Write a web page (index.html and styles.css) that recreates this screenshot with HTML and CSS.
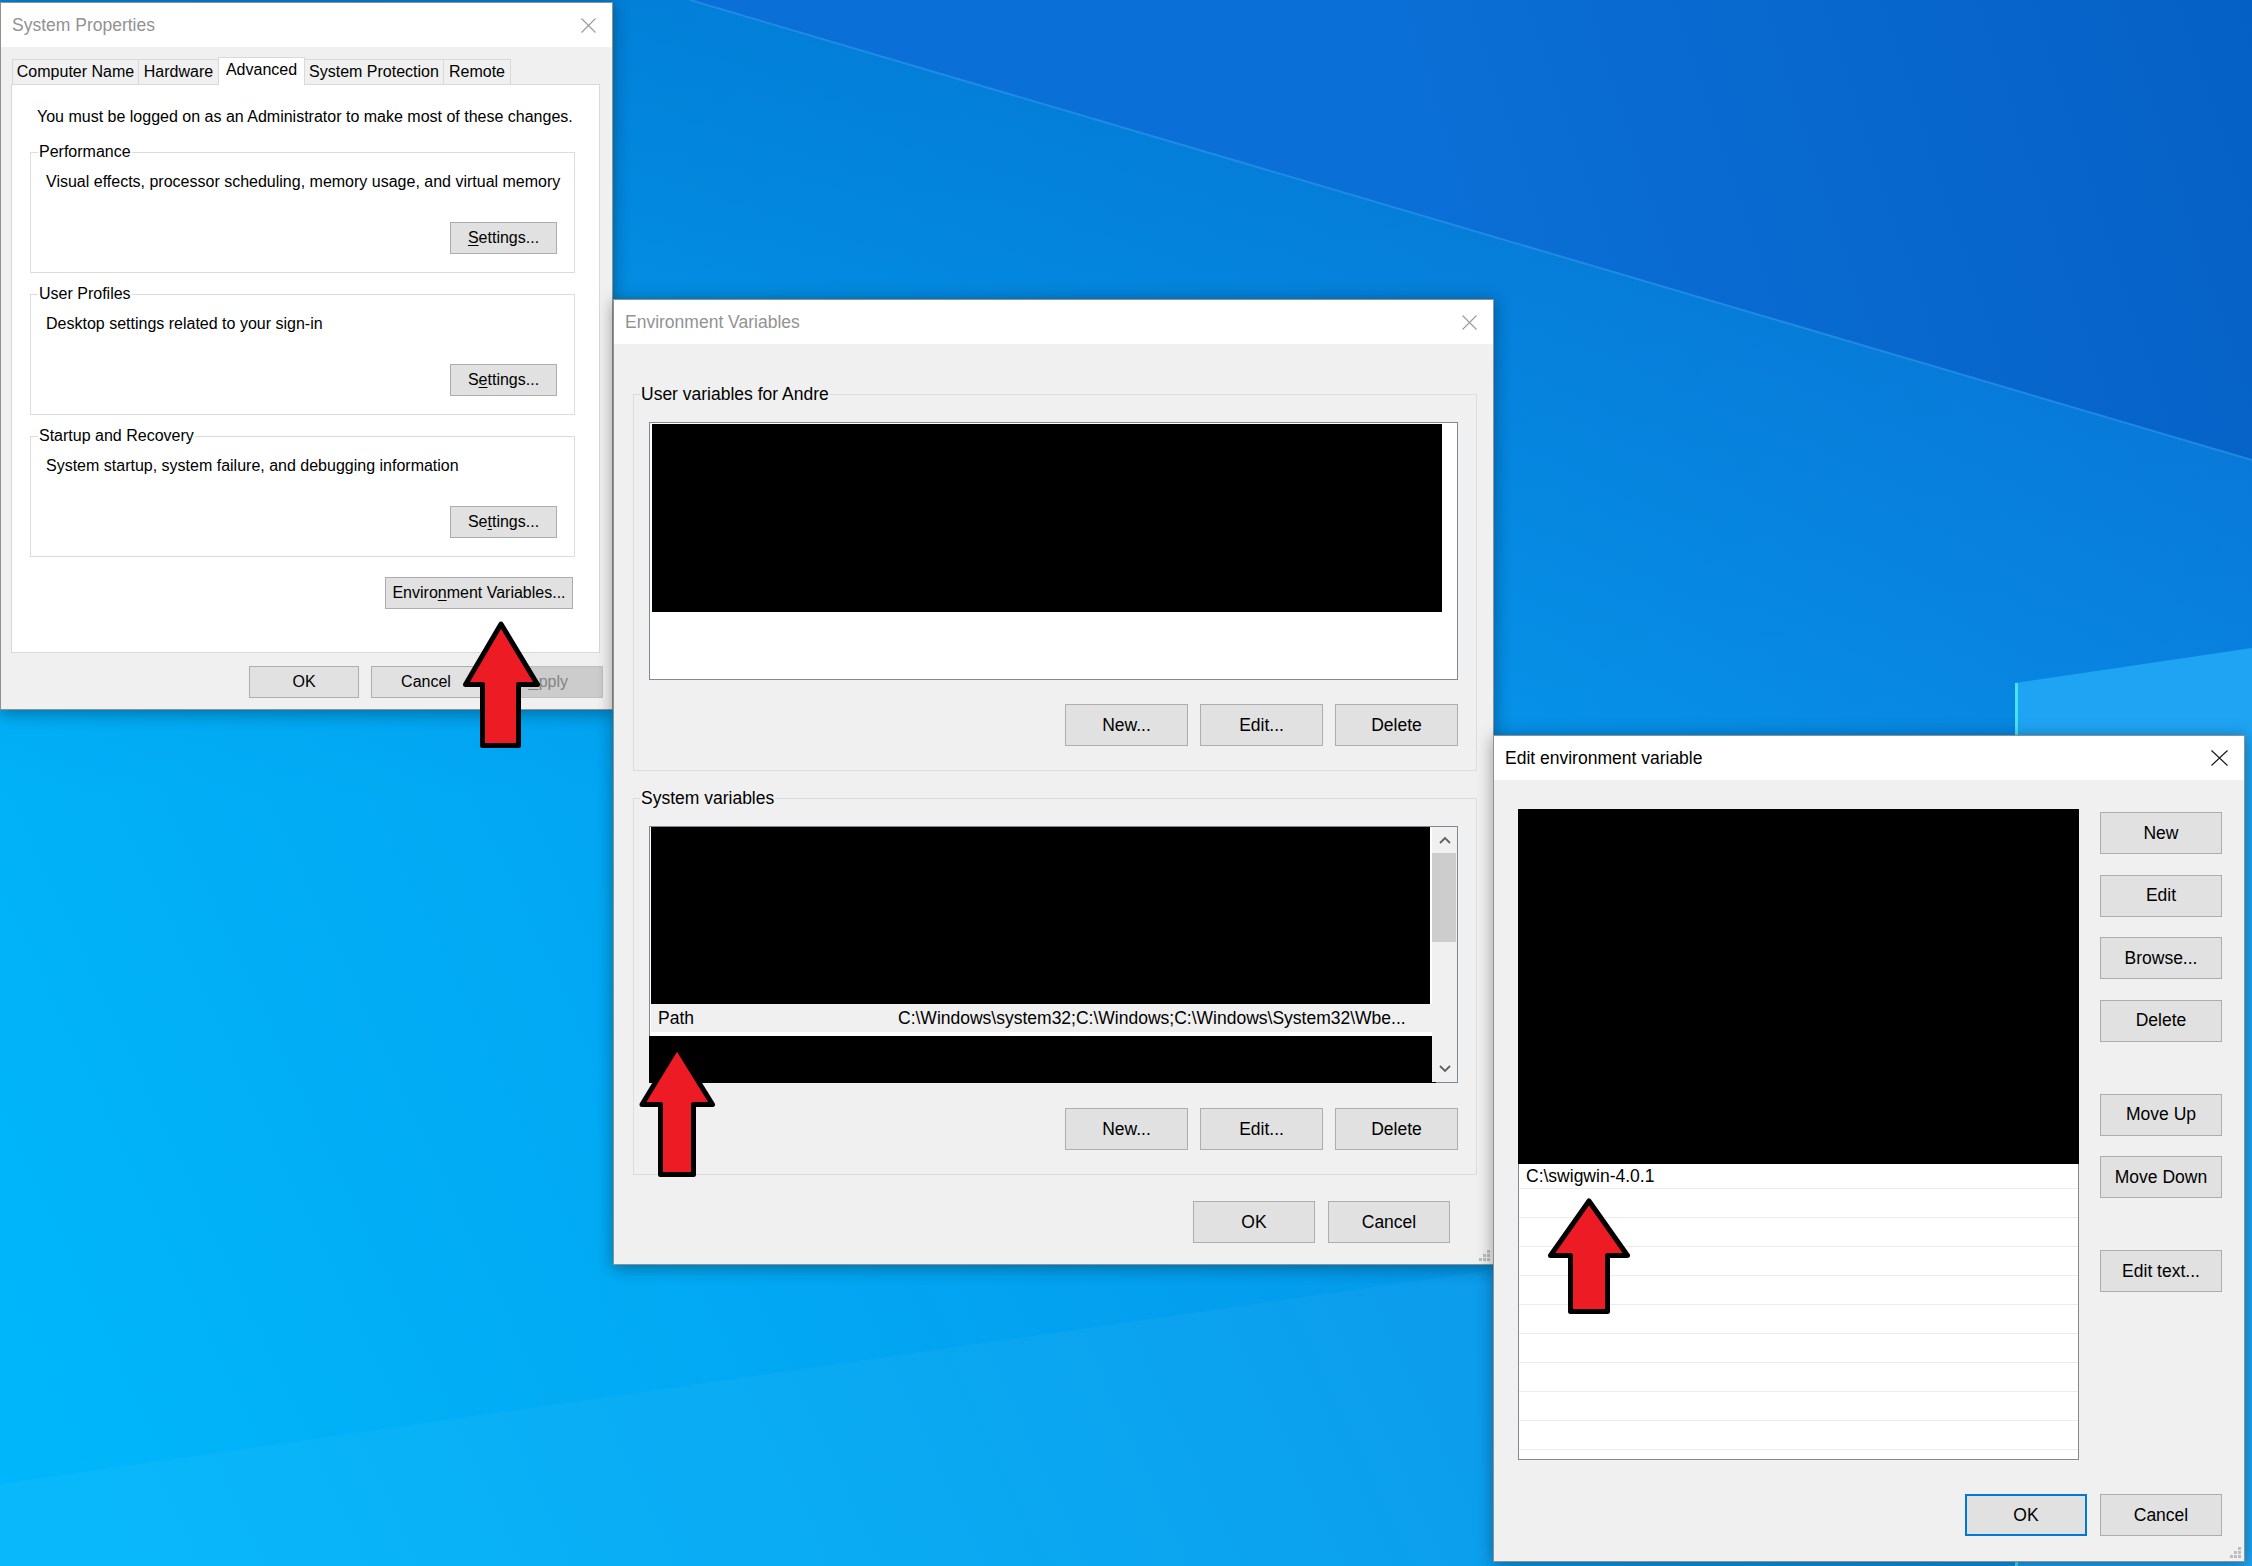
FILE: index.html
```html
<!DOCTYPE html>
<html lang="en">
<head>
<meta charset="utf-8">
<title>Environment Variables</title>
<link rel="stylesheet" href="styles.css">
</head>
<body>
<div class="desktop">
  <svg class="wallpaper" width="2252" height="1566" viewBox="0 0 2252 1566">
    <defs>
      <linearGradient id="gBase" gradientUnits="userSpaceOnUse" x1="0" y1="1300" x2="2252" y2="250">
        <stop offset="0" stop-color="#00b6fa"/>
        <stop offset="0.45" stop-color="#039eee"/>
        <stop offset="1" stop-color="#0a80df"/>
      </linearGradient>
      <linearGradient id="gTop" gradientUnits="userSpaceOnUse" x1="0" y1="0" x2="0" y2="800">
        <stop offset="0" stop-color="#0048b0" stop-opacity="0.35"/>
        <stop offset="1" stop-color="#0048b0" stop-opacity="0"/>
      </linearGradient>
      <linearGradient id="gBeam" gradientUnits="userSpaceOnUse" x1="1450" y1="260" x2="2252" y2="0">
        <stop offset="0" stop-color="#0a6fd6"/>
        <stop offset="1" stop-color="#0560c5"/>
      </linearGradient>
    </defs>
    <rect x="0" y="0" width="2252" height="1566" fill="url(#gBase)"/>
    <rect x="0" y="0" width="2252" height="1566" fill="url(#gTop)"/>
    <polygon points="690,0 2252,0 2252,460" fill="url(#gBeam)"/>
    <line x1="690" y1="0" x2="2252" y2="460" stroke="#2a95ea" stroke-width="2" opacity="0.7"/>
    <polygon points="0,1484 2252,1161 2252,1566 0,1566" fill="#ffffff" opacity="0.035"/>
    <polygon points="2015,683 2252,648 2252,1566 2015,1566" fill="#1fa4f4"/>
    <line x1="2016.5" y1="683" x2="2016.5" y2="1566" stroke="#48e3f2" stroke-width="3"/>
  </svg>

  <!-- System Properties -->
  <section class="win win-sysprops">
    <header class="titlebar">
      <span class="title">System Properties</span>
      <svg class="close-x" width="15" height="15" viewBox="0 0 15 15"><path d="M0.5 0.5 L14.5 14.5 M14.5 0.5 L0.5 14.5" stroke="#9a9a9a" stroke-width="1.1" fill="none"/></svg>
    </header>
    <div class="sp-body">
      <div class="tabs">
        <div class="tab tab-first tab-cn">Computer Name</div>
        <div class="tab tab-hw">Hardware</div>
        <div class="tab tab-selected tab-adv">Advanced</div>
        <div class="tab tab-sp">System Protection</div>
        <div class="tab tab-rm">Remote</div>
      </div>
      <div class="tabpanel">
        <p class="note">You must be logged on as an Administrator to make most of these changes.</p>
        <fieldset class="group">
          <legend>Performance</legend>
          <p class="desc">Visual effects, processor scheduling, memory usage, and virtual memory</p>
          <div class="group-actions"><button class="btn btn-sp"><span><u>S</u>ettings...</span></button></div>
        </fieldset>
        <fieldset class="group">
          <legend>User Profiles</legend>
          <p class="desc">Desktop settings related to your sign-in</p>
          <div class="group-actions"><button class="btn btn-sp"><span>S<u>e</u>ttings...</span></button></div>
        </fieldset>
        <fieldset class="group">
          <legend>Startup and Recovery</legend>
          <p class="desc">System startup, system failure, and debugging information</p>
          <div class="group-actions"><button class="btn btn-sp"><span>Se<u>t</u>tings...</span></button></div>
        </fieldset>
        <div class="env-row"><button class="btn btn-envvars"><span>Enviro<u>n</u>ment Variables...</span></button></div>
      </div>
      <div class="sp-foot">
        <button class="btn btn-foot">OK</button>
        <button class="btn btn-foot">Cancel</button>
        <button class="btn btn-foot btn-disabled"><span><u>A</u>pply</span></button>
      </div>
    </div>
  </section>

  <!-- Environment Variables -->
  <section class="win win-envvars">
    <header class="titlebar">
      <span class="title">Environment Variables</span>
      <svg class="close-x" width="15" height="15" viewBox="0 0 15 15"><path d="M0.5 0.5 L14.5 14.5 M14.5 0.5 L0.5 14.5" stroke="#9a9a9a" stroke-width="1.1" fill="none"/></svg>
    </header>
    <div class="ev-body">
      <fieldset class="ev-group">
        <legend>User variables for Andre</legend>
        <div class="lb lb-user"><div class="redact redact-user"></div></div>
        <div class="ev-actions">
          <button class="btn btn-ev">New...</button>
          <button class="btn btn-ev">Edit...</button>
          <button class="btn btn-ev">Delete</button>
        </div>
      </fieldset>
      <fieldset class="ev-group ev-group-sys">
        <legend>System variables</legend>
        <div class="lb lb-sys">
          <div class="lb-sys-main">
            <div class="redact redact-sys-top"></div>
            <div class="path-row"><span class="path-name">Path</span><span class="path-value">C:\Windows\system32;C:\Windows;C:\Windows\System32\Wbe...</span></div>
            <div class="path-gap"></div>
            <div class="redact redact-sys-bottom"></div>
          </div>
          <div class="vscroll">
            <div class="vs-arrow"><svg width="12" height="8" viewBox="0 0 12 8"><polyline points="1,7 6,2 11,7" fill="none" stroke="#606060" stroke-width="1.8"/></svg></div>
            <div class="vs-thumb"></div>
            <div class="vs-track"></div>
            <div class="vs-arrow"><svg width="12" height="8" viewBox="0 0 12 8"><polyline points="1,1 6,6 11,1" fill="none" stroke="#606060" stroke-width="1.8"/></svg></div>
          </div>
        </div>
        <div class="ev-actions ev-actions-sys">
          <button class="btn btn-ev">New...</button>
          <button class="btn btn-ev">Edit...</button>
          <button class="btn btn-ev">Delete</button>
        </div>
      </fieldset>
      <div class="ev-foot">
        <button class="btn btn-ev-foot">OK</button>
        <button class="btn btn-ev-foot">Cancel</button>
      </div>
    </div>
    <svg class="grip" width="12" height="12" viewBox="0 0 12 12"><g fill="#bdbdbd"><rect x="8" y="0" width="3" height="3"/><rect x="4" y="4" width="3" height="3"/><rect x="8" y="4" width="3" height="3"/><rect x="0" y="8" width="3" height="3"/><rect x="4" y="8" width="3" height="3"/><rect x="8" y="8" width="3" height="3"/></g></svg>
  </section>

  <!-- Edit environment variable -->
  <section class="win win-edit">
    <header class="titlebar titlebar-active">
      <span class="title">Edit environment variable</span>
      <svg class="close-x close-x-lg" width="17" height="16" viewBox="0 0 17 16"><path d="M0.5 0.5 L16.5 15.5 M16.5 0.5 L0.5 15.5" stroke="#1a1a1a" stroke-width="1.2" fill="none"/></svg>
    </header>
    <div class="ed-body">
      <div class="ed-main">
        <div class="ed-list">
          <div class="redact ed-redact"></div>
          <div class="ed-row ed-row-first">C:\swigwin-4.0.1</div>
          <div class="ed-row"></div>
          <div class="ed-row"></div>
          <div class="ed-row"></div>
          <div class="ed-row"></div>
          <div class="ed-row"></div>
          <div class="ed-row"></div>
          <div class="ed-row"></div>
          <div class="ed-row"></div>
          <div class="ed-row"></div>
        </div>
        <div class="ed-side">
          <button class="btn btn-ed">New</button>
          <button class="btn btn-ed">Edit</button>
          <button class="btn btn-ed">Browse...</button>
          <button class="btn btn-ed">Delete</button>
          <button class="btn btn-ed ed-spaced">Move Up</button>
          <button class="btn btn-ed">Move Down</button>
          <button class="btn btn-ed ed-spaced">Edit text...</button>
        </div>
      </div>
      <div class="ed-foot">
        <button class="btn btn-ed btn-default">OK</button>
        <button class="btn btn-ed">Cancel</button>
      </div>
    </div>
    <svg class="grip" width="12" height="12" viewBox="0 0 12 12"><g fill="#bdbdbd"><rect x="8" y="0" width="3" height="3"/><rect x="4" y="4" width="3" height="3"/><rect x="8" y="4" width="3" height="3"/><rect x="0" y="8" width="3" height="3"/><rect x="4" y="8" width="3" height="3"/><rect x="8" y="8" width="3" height="3"/></g></svg>
  </section>

  <!-- Annotation arrows -->
  <svg class="annotations" width="2252" height="1566" viewBox="0 0 2252 1566">
    <g fill="#ed1c24" stroke="#000" stroke-width="5" stroke-linejoin="round">
      <polygon points="501,624 537.5,684.5 518.5,684.5 518.5,745.5 482.5,745.5 482.5,684.5 465.5,684.5"/>
      <polygon points="677,1047 712.5,1104.5 693.5,1104.5 693.5,1174.5 660.5,1174.5 660.5,1104.5 642,1104.5"/>
      <polygon points="1589,1201 1627.5,1255.5 1607.5,1255.5 1607.5,1311.5 1570.5,1311.5 1570.5,1255.5 1550.5,1255.5"/>
    </g>
  </svg>
</div>
</body>
</html>
```

FILE: styles.css
```css
* { box-sizing: border-box; }

html, body {
  margin: 0;
  padding: 0;
}

body {
  width: 2252px;
  height: 1566px;
  overflow: hidden;
  font-family: "Liberation Sans", Arial, sans-serif;
  color: #000;
}

.desktop {
  position: relative;
  width: 2252px;
  height: 1566px;
  overflow: hidden;
}

.wallpaper {
  position: absolute;
  left: 0;
  top: 0;
  display: block;
}

.annotations {
  position: absolute;
  left: 0;
  top: 0;
  display: block;
  pointer-events: none;
}

/* ---------- generic window ---------- */
.win {
  position: absolute;
  display: flex;
  flex-direction: column;
  background: #f0f0f0;
  border: 1px solid rgba(0, 0, 0, 0.4);
  box-shadow: 0 0 16px rgba(0, 0, 0, 0.22), 0 6px 14px rgba(0, 0, 0, 0.16);
}

.win-sysprops { left: 0; top: 2px; width: 613px; height: 708px; }
.win-envvars  { left: 613px; top: 299px; width: 881px; height: 966px; }
.win-edit     { left: 1493px; top: 735px; width: 752px; height: 827px; }

.titlebar {
  flex: none;
  height: 44px;
  background: #fff;
  display: flex;
  align-items: center;
  justify-content: space-between;
  padding-left: 11px;
}

.title {
  font-size: 17.5px;
  line-height: 20px;
  color: #929292;
  white-space: nowrap;
}

.titlebar-active .title { color: #000; }

.close-x {
  display: block;
  margin-right: 16px;
}

.grip {
  position: absolute;
  right: 2px;
  bottom: 2px;
  display: block;
}

p { margin: 0; }

u { text-decoration: underline; text-underline-offset: 2px; }

/* ---------- buttons ---------- */
.btn {
  font-family: inherit;
  font-size: inherit;
  color: #000;
  background: #e1e1e1;
  border: 1px solid #adadad;
  padding: 0;
  margin: 0;
  display: flex;
  align-items: center;
  justify-content: center;
  white-space: nowrap;
  flex: none;
}

.btn-sp { width: 107px; height: 32px; }
.btn-envvars { width: 188px; height: 32px; }
.btn-foot { width: 110px; height: 32px; }
.btn-disabled { background: #cccccc; border-color: #bfbfbf; color: #838383; }
.btn-ev { width: 123px; height: 42px; }
.btn-ev-foot { width: 122px; height: 42px; }
.btn-ed { width: 122px; height: 42px; }
.btn-default { border: 2px solid #0078d7; }

/* ---------- System Properties ---------- */
.sp-body {
  flex: 1;
  display: flex;
  flex-direction: column;
  padding: 10px 9px 0 10px;
  font-size: 16px;
}

.tabs {
  display: flex;
  align-items: flex-end;
  height: 27px;
  margin-left: 1px;
}

.tab {
  height: 25px;
  background: #f0f0f0;
  border-top: 1px solid #d9d9d9;
  border-right: 1px solid #d9d9d9;
  text-align: center;
  line-height: 24px;
  white-space: nowrap;
}

.tab-first { border-left: 1px solid #d9d9d9; }

.tab-selected {
  position: relative;
  z-index: 1;
  height: 28px;
  margin-left: -1px;
  margin-bottom: -1px;
  background: #fff;
  border-left: 1px solid #d9d9d9;
  line-height: 24px;
}

.tab-cn { width: 127px; }
.tab-hw { width: 80px; }
.tab-adv { width: 87px; }
.tab-sp { width: 139px; }
.tab-rm { width: 67px; }

.tabpanel {
  width: 589px;
  height: 569px;
  background: #fff;
  border: 1px solid #d9d9d9;
}

.note {
  margin: 23px 0 0 25px;
  line-height: 18px;
  white-space: nowrap;
}

.group {
  margin: 17px 24px 0 18px;
  min-width: 0;
  border: 1px solid #dcdcdc;
  padding: 12px 17px 18px 15px;
}

.group + .group { margin-top: 12px; }

.group legend {
  padding: 0 1px;
  margin-left: -8px;
  line-height: 18px;
}

.desc {
  line-height: 18px;
  white-space: nowrap;
}

.group-actions {
  display: flex;
  justify-content: flex-end;
  margin-top: 31px;
}

.env-row {
  display: flex;
  justify-content: flex-end;
  margin: 20px 26px 0 0;
}

.sp-foot {
  display: flex;
  justify-content: flex-end;
  gap: 12px;
  margin-top: 13px;
}

/* ---------- Environment Variables ---------- */
.ev-body {
  flex: 1;
  display: flex;
  flex-direction: column;
  padding: 40px 16px 0 19px;
  font-size: 17.5px;
}

.ev-group {
  margin: 0;
  min-width: 0;
  border: 1px solid #dcdcdc;
  padding: 18px 18px 24px 15px;
}

.ev-group-sys { margin-top: 17px; }

.ev-group legend {
  padding: 0 1px;
  margin-left: -9px;
  line-height: 20px;
}

.lb {
  border: 1px solid #828790;
  background: #fff;
}

.lb-user {
  height: 258px;
  padding: 1px 0 0 2px;
}

.redact { background: #000; }

.redact-user { width: 790px; height: 188px; }

.lb-sys {
  height: 257px;
  display: grid;
  grid-template-columns: 1fr 25px;
}

.lb-sys-main {
  display: flex;
  flex-direction: column;
  min-width: 0;
}

.redact-sys-top {
  width: 779px;
  height: 177px;
  margin-left: 1px;
}

.path-row {
  height: 28px;
  margin-left: 1px;
  background: #f0f0f0;
  display: flex;
  align-items: center;
  padding-left: 7px;
  white-space: nowrap;
  overflow: hidden;
}

.path-name { width: 240px; flex: none; }

.path-gap { height: 4px; }

.redact-sys-bottom {
  flex: 1;
  margin: 0 -4px -1px -1px;
}

.vscroll {
  background: #f0f0f0;
  display: flex;
  flex-direction: column;
  position: relative;
}

.vs-arrow {
  height: 26px;
  display: flex;
  align-items: center;
  justify-content: center;
}

.vs-arrow svg { display: block; }

.vs-thumb {
  height: 89px;
  margin-right: 1px;
  background: #cdcdcd;
}

.vs-track { flex: 1; }

.ev-actions {
  display: flex;
  justify-content: flex-end;
  gap: 12px;
  margin-top: 24px;
}

.ev-actions-sys { margin-top: 25px; }

.ev-foot {
  display: flex;
  justify-content: flex-end;
  gap: 13px;
  margin: 26px 27px 0 0;
}

/* ---------- Edit environment variable ---------- */
.ed-body {
  flex: 1;
  display: flex;
  flex-direction: column;
  padding: 29px 22px 0 24px;
  font-size: 17.5px;
}

.ed-main {
  display: grid;
  grid-template-columns: 561px 122px;
  column-gap: 21px;
  align-items: start;
}

.ed-list {
  height: 651px;
  background: #fff;
  border: 1px solid #828790;
  border-top: none;
}

.ed-redact {
  height: 355px;
  margin: 0 -1px;
}

.ed-row {
  height: 29px;
  border-bottom: 1px solid #ececec;
  padding-left: 7px;
  line-height: 28px;
  white-space: nowrap;
}

.ed-row-first {
  height: 25px;
  line-height: 24px;
}

.ed-side {
  display: flex;
  flex-direction: column;
  gap: 20.5px;
  padding-top: 3px;
}

.ed-spaced { margin-top: 31.5px; }

.ed-foot {
  display: flex;
  justify-content: flex-end;
  gap: 13px;
  margin-top: 34px;
}
```
